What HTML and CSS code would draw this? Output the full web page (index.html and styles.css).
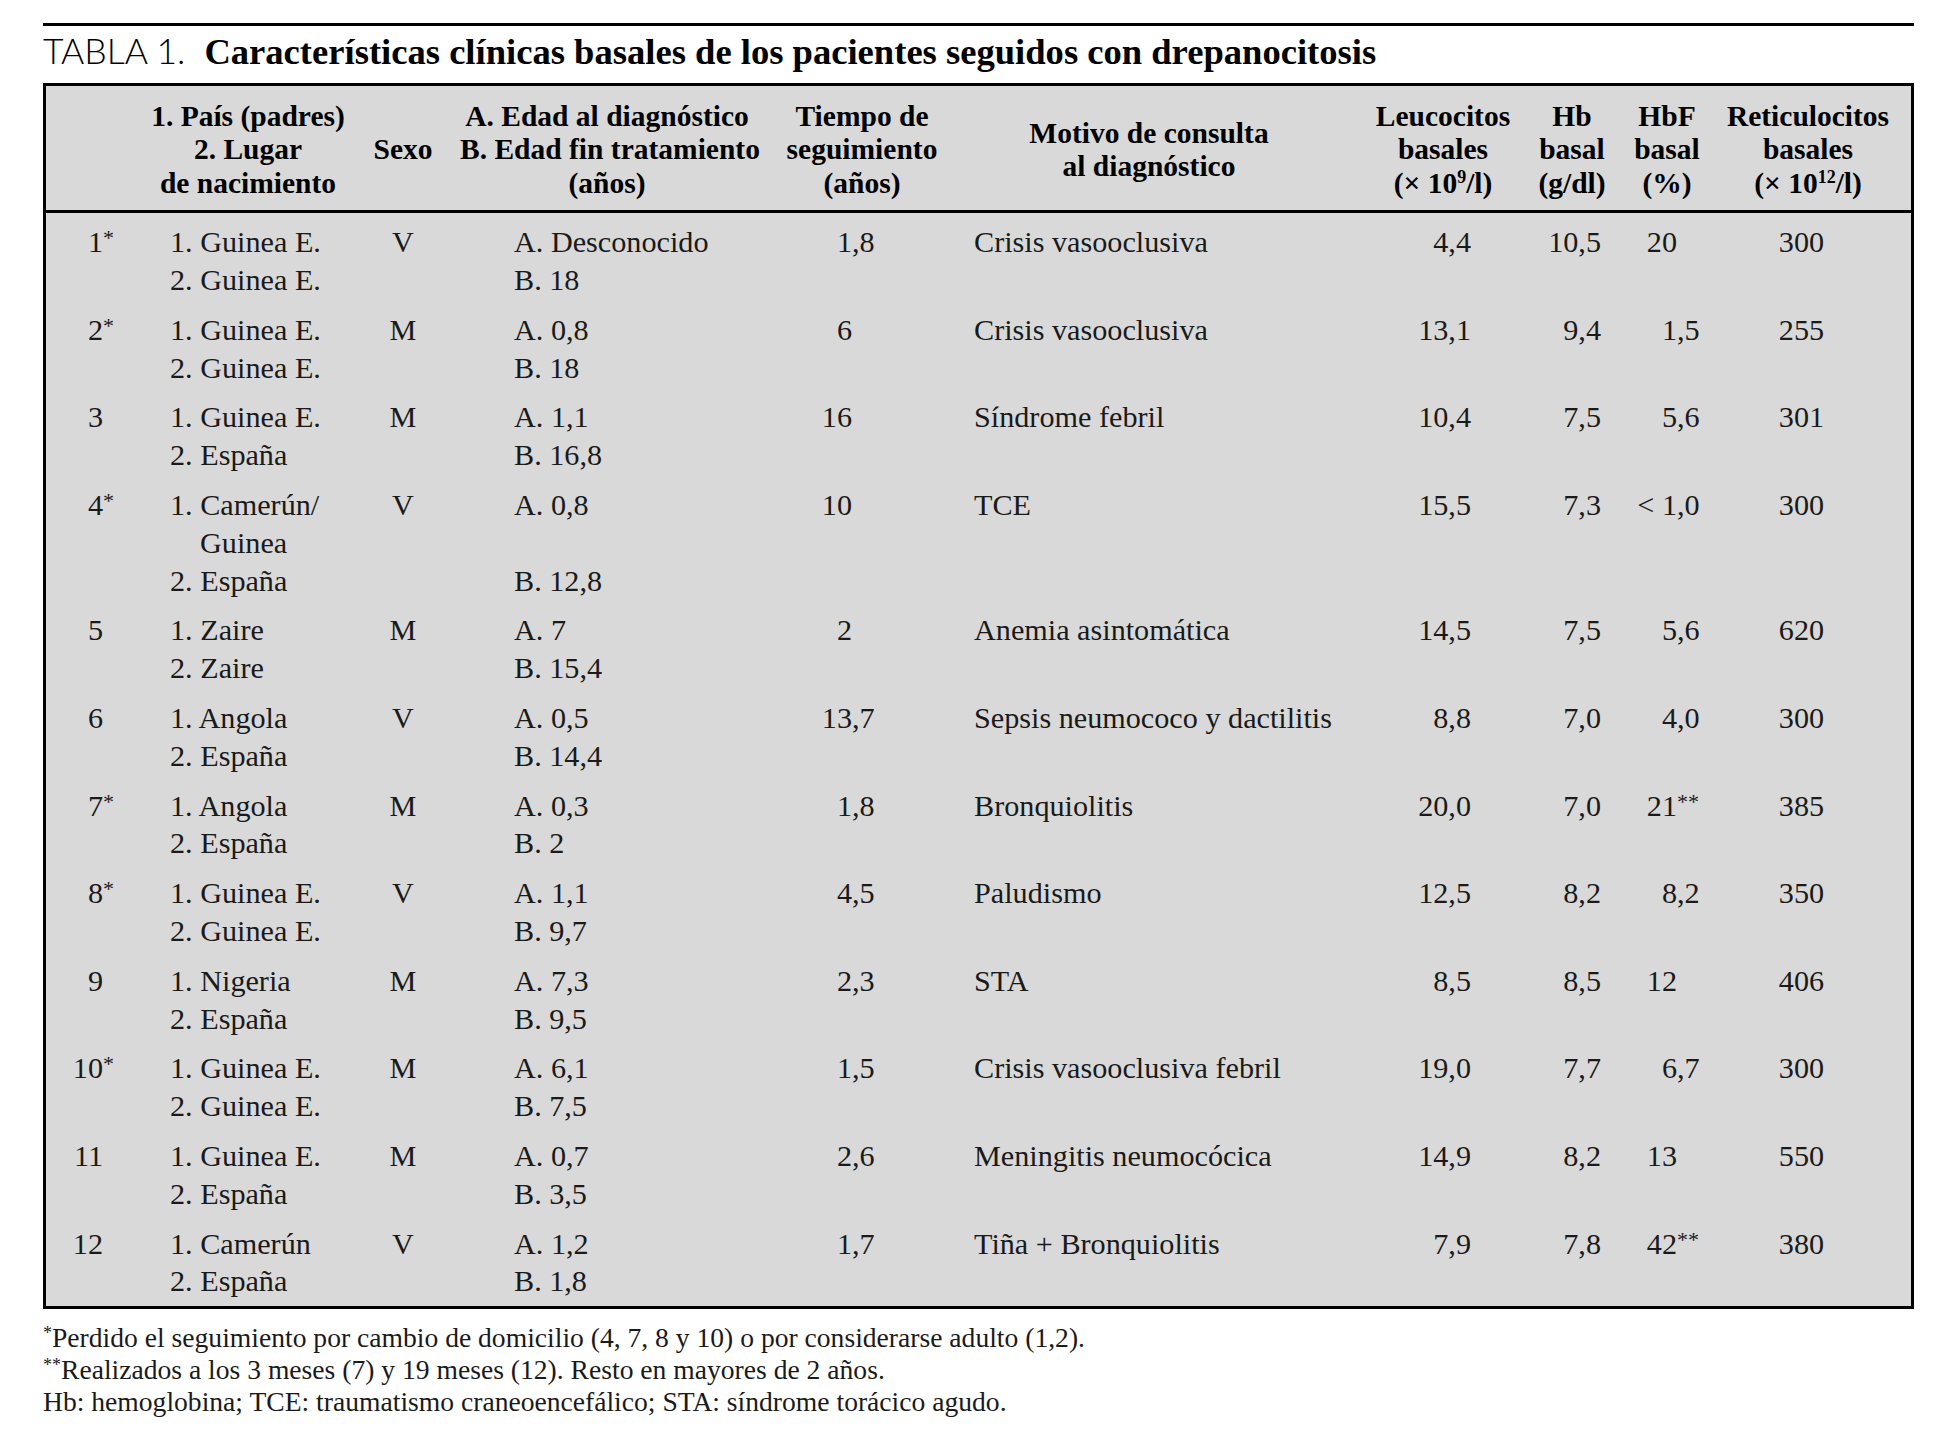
FILE: index.html
```html
<!DOCTYPE html>
<html lang="es">
<head>
<meta charset="utf-8">
<title>Tabla 1</title>
<link rel="stylesheet" href="styles.css">
</head>
<body>
<div class="page">
  <h1 class="title"><span class="label">TABLA 1.</span><span class="caption">Características clínicas basales de los pacientes seguidos con drepanocitosis</span></h1>
  <table class="data">
    <colgroup>
      <col class="c1"><col class="c2"><col class="c3"><col class="c4"><col class="c5">
      <col class="c6"><col class="c7"><col class="c8"><col class="c9"><col class="c10">
    </colgroup>
    <thead>
      <tr>
        <th></th>
        <th>1. País (padres)<br>2. Lugar<br>de nacimiento</th>
        <th>Sexo</th>
        <th>A. Edad al diagnóstico<br>B. Edad fin tratamiento<br>(años)</th>
        <th>Tiempo de<br>seguimiento<br>(años)</th>
        <th class="h-motivo">Motivo de consulta<br>al diagnóstico</th>
        <th>Leucocitos<br>basales<br>(× 10<sup>9</sup>/l)</th>
        <th>Hb<br>basal<br>(g/dl)</th>
        <th>HbF<br>basal<br>(%)</th>
        <th class="h-reti">Reticulocitos<br>basales<br>(× 10<sup>12</sup>/l)</th>
      </tr>
    </thead>
    <tbody>
      <tr>
        <td class="num">1<span class="ast">*</span></td>
        <td class="pais">1. Guinea E.<br>2. Guinea E.</td>
        <td class="sexo">V</td>
        <td class="edad">A. Desconocido<br>B. 18</td>
        <td class="tiempo"><span class="i">1</span>,8</td>
        <td class="motivo">Crisis vasooclusiva</td>
        <td class="leuco">4,4</td>
        <td class="hb">10,5</td>
        <td class="hbf"><span class="i">20</span></td>
        <td class="reti">300</td>
      </tr>
      <tr>
        <td class="num">2<span class="ast">*</span></td>
        <td class="pais">1. Guinea E.<br>2. Guinea E.</td>
        <td class="sexo">M</td>
        <td class="edad">A. 0,8<br>B. 18</td>
        <td class="tiempo"><span class="i">6</span></td>
        <td class="motivo">Crisis vasooclusiva</td>
        <td class="leuco">13,1</td>
        <td class="hb">9,4</td>
        <td class="hbf"><span class="i">1</span>,5</td>
        <td class="reti">255</td>
      </tr>
      <tr>
        <td class="num">3</td>
        <td class="pais">1. Guinea E.<br>2. España</td>
        <td class="sexo">M</td>
        <td class="edad">A. 1,1<br>B. 16,8</td>
        <td class="tiempo"><span class="i">16</span></td>
        <td class="motivo">Síndrome febril</td>
        <td class="leuco">10,4</td>
        <td class="hb">7,5</td>
        <td class="hbf"><span class="i">5</span>,6</td>
        <td class="reti">301</td>
      </tr>
      <tr>
        <td class="num">4<span class="ast">*</span></td>
        <td class="pais">1. Camerún/<br><span class="indent">Guinea</span><br>2. España</td>
        <td class="sexo">V</td>
        <td class="edad">A. 0,8<br>&nbsp;<br>B. 12,8</td>
        <td class="tiempo"><span class="i">10</span></td>
        <td class="motivo">TCE</td>
        <td class="leuco">15,5</td>
        <td class="hb">7,3</td>
        <td class="hbf"><span class="i">&lt; 1</span>,0</td>
        <td class="reti">300</td>
      </tr>
      <tr>
        <td class="num">5</td>
        <td class="pais">1. Zaire<br>2. Zaire</td>
        <td class="sexo">M</td>
        <td class="edad">A. 7<br>B. 15,4</td>
        <td class="tiempo"><span class="i">2</span></td>
        <td class="motivo">Anemia asintomática</td>
        <td class="leuco">14,5</td>
        <td class="hb">7,5</td>
        <td class="hbf"><span class="i">5</span>,6</td>
        <td class="reti">620</td>
      </tr>
      <tr>
        <td class="num">6</td>
        <td class="pais">1. Angola<br>2. España</td>
        <td class="sexo">V</td>
        <td class="edad">A. 0,5<br>B. 14,4</td>
        <td class="tiempo"><span class="i">13</span>,7</td>
        <td class="motivo">Sepsis neumococo y dactilitis</td>
        <td class="leuco">8,8</td>
        <td class="hb">7,0</td>
        <td class="hbf"><span class="i">4</span>,0</td>
        <td class="reti">300</td>
      </tr>
      <tr>
        <td class="num">7<span class="ast">*</span></td>
        <td class="pais">1. Angola<br>2. España</td>
        <td class="sexo">M</td>
        <td class="edad">A. 0,3<br>B. 2</td>
        <td class="tiempo"><span class="i">1</span>,8</td>
        <td class="motivo">Bronquiolitis</td>
        <td class="leuco">20,0</td>
        <td class="hb">7,0</td>
        <td class="hbf"><span class="i">21</span><span class="ast2">**</span></td>
        <td class="reti">385</td>
      </tr>
      <tr>
        <td class="num">8<span class="ast">*</span></td>
        <td class="pais">1. Guinea E.<br>2. Guinea E.</td>
        <td class="sexo">V</td>
        <td class="edad">A. 1,1<br>B. 9,7</td>
        <td class="tiempo"><span class="i">4</span>,5</td>
        <td class="motivo">Paludismo</td>
        <td class="leuco">12,5</td>
        <td class="hb">8,2</td>
        <td class="hbf"><span class="i">8</span>,2</td>
        <td class="reti">350</td>
      </tr>
      <tr>
        <td class="num">9</td>
        <td class="pais">1. Nigeria<br>2. España</td>
        <td class="sexo">M</td>
        <td class="edad">A. 7,3<br>B. 9,5</td>
        <td class="tiempo"><span class="i">2</span>,3</td>
        <td class="motivo">STA</td>
        <td class="leuco">8,5</td>
        <td class="hb">8,5</td>
        <td class="hbf"><span class="i">12</span></td>
        <td class="reti">406</td>
      </tr>
      <tr>
        <td class="num">10<span class="ast">*</span></td>
        <td class="pais">1. Guinea E.<br>2. Guinea E.</td>
        <td class="sexo">M</td>
        <td class="edad">A. 6,1<br>B. 7,5</td>
        <td class="tiempo"><span class="i">1</span>,5</td>
        <td class="motivo">Crisis vasooclusiva febril</td>
        <td class="leuco">19,0</td>
        <td class="hb">7,7</td>
        <td class="hbf"><span class="i">6</span>,7</td>
        <td class="reti">300</td>
      </tr>
      <tr>
        <td class="num">11</td>
        <td class="pais">1. Guinea E.<br>2. España</td>
        <td class="sexo">M</td>
        <td class="edad">A. 0,7<br>B. 3,5</td>
        <td class="tiempo"><span class="i">2</span>,6</td>
        <td class="motivo">Meningitis neumocócica</td>
        <td class="leuco">14,9</td>
        <td class="hb">8,2</td>
        <td class="hbf"><span class="i">13</span></td>
        <td class="reti">550</td>
      </tr>
      <tr>
        <td class="num">12</td>
        <td class="pais">1. Camerún<br>2. España</td>
        <td class="sexo">V</td>
        <td class="edad">A. 1,2<br>B. 1,8</td>
        <td class="tiempo"><span class="i">1</span>,7</td>
        <td class="motivo">Tiña + Bronquiolitis</td>
        <td class="leuco">7,9</td>
        <td class="hb">7,8</td>
        <td class="hbf"><span class="i">42</span><span class="ast2">**</span></td>
        <td class="reti">380</td>
      </tr>
    </tbody>
  </table>
  <div class="notes">
    <p><span class="fn">*</span>Perdido el seguimiento por cambio de domicilio (4, 7, 8 y 10) o por considerarse adulto (1,2).</p>
    <p><span class="fn">**</span>Realizados a los 3 meses (7) y 19 meses (12). Resto en mayores de 2 años.</p>
    <p>Hb: hemoglobina; TCE: traumatismo craneoencefálico; STA: síndrome torácico agudo.</p>
  </div>
</div>
</body>
</html>
```
FILE: styles.css
```css
html, body {
  margin: 0;
  padding: 0;
  background: #ffffff;
}

.page {
  width: 1871px;
  padding: 23px 0 0 43px;
  color: #1a1a1a;
  font-family: "Liberation Serif", "Times New Roman", serif;
}

.title {
  margin: 0;
  border-top: 3px solid #000;
  height: 50px;
  line-height: 50px;
  font-weight: normal;
  white-space: nowrap;
  color: #000;
}

.title .label {
  font-family: Lato, "Liberation Sans", sans-serif;
  font-weight: 300;
  font-size: 35.5px;
  margin-right: 19px;
}

.title .caption {
  font-family: "Liberation Serif", serif;
  font-weight: bold;
  font-size: 36.6px;
}

.data {
  margin-top: 7px;
  width: 1871px;
  table-layout: fixed;
  border-collapse: separate;
  border-spacing: 0;
  border: 3px solid #000;
  background: #d9d9d9;
}

.c1 { width: 104px; }
.c2 { width: 196px; }
.c3 { width: 114px; }
.c4 { width: 294px; }
.c5 { width: 216px; }
.c6 { width: 394px; }
.c7 { width: 158px; }
.c8 { width: 100px; }
.c9 { width: 90px; }
.c10 { width: 199px; }

.data th {
  font-size: 29.5px;
  font-weight: bold;
  line-height: 33.4px;
  text-align: center;
  vertical-align: middle;
  white-space: nowrap;
  padding: 14px 0 10px 0;
  border-bottom: 3px solid #000;
  color: #000;
}

.data th sup {
  font-size: 18px;
  line-height: 0;
  vertical-align: 10px;
}

.data th.h-motivo { padding-right: 36px; }
.data th.h-reti { padding-right: 7px; }

.data td {
  font-size: 30.2px;
  line-height: 37.8px;
  vertical-align: top;
  white-space: nowrap;
  padding: 6px 0 6px 0;
}

.data tbody tr:first-child td { padding-top: 11px; }
.data tbody tr:last-child td { padding-bottom: 5px; }

.data td.num {
  text-align: right;
  padding-right: 47px;
}

.ast {
  display: inline-block;
  width: 0;
  font-size: 22px;
  vertical-align: 7px;
  line-height: 0;
}

.ast2 {
  font-size: 22px;
  vertical-align: 7px;
  line-height: 0;
}

.data td.pais { padding-left: 20px; }
.indent { padding-left: 30px; }

.data td.sexo { text-align: center; }

.data td.edad { padding-left: 54px; }

.data td.tiempo { padding-left: 38px; }
.data td.tiempo .i {
  display: inline-block;
  width: 60px;
  text-align: right;
}

.data td.motivo { padding-left: 4px; }

.data td.leuco {
  text-align: right;
  padding-right: 51px;
}

.data td.hb {
  text-align: right;
  padding-right: 21px;
}

.data td.hbf { padding-left: 5px; }
.data td.hbf .i {
  display: inline-block;
  width: 50px;
  text-align: right;
}

.data td.reti {
  text-align: center;
  padding-right: 20px;
}

.notes {
  margin-top: 13px;
  font-size: 27.6px;
  line-height: 32px;
}

.notes p { margin: 0; }

.fn {
  font-size: 18px;
  vertical-align: 8px;
  line-height: 0;
}
```
